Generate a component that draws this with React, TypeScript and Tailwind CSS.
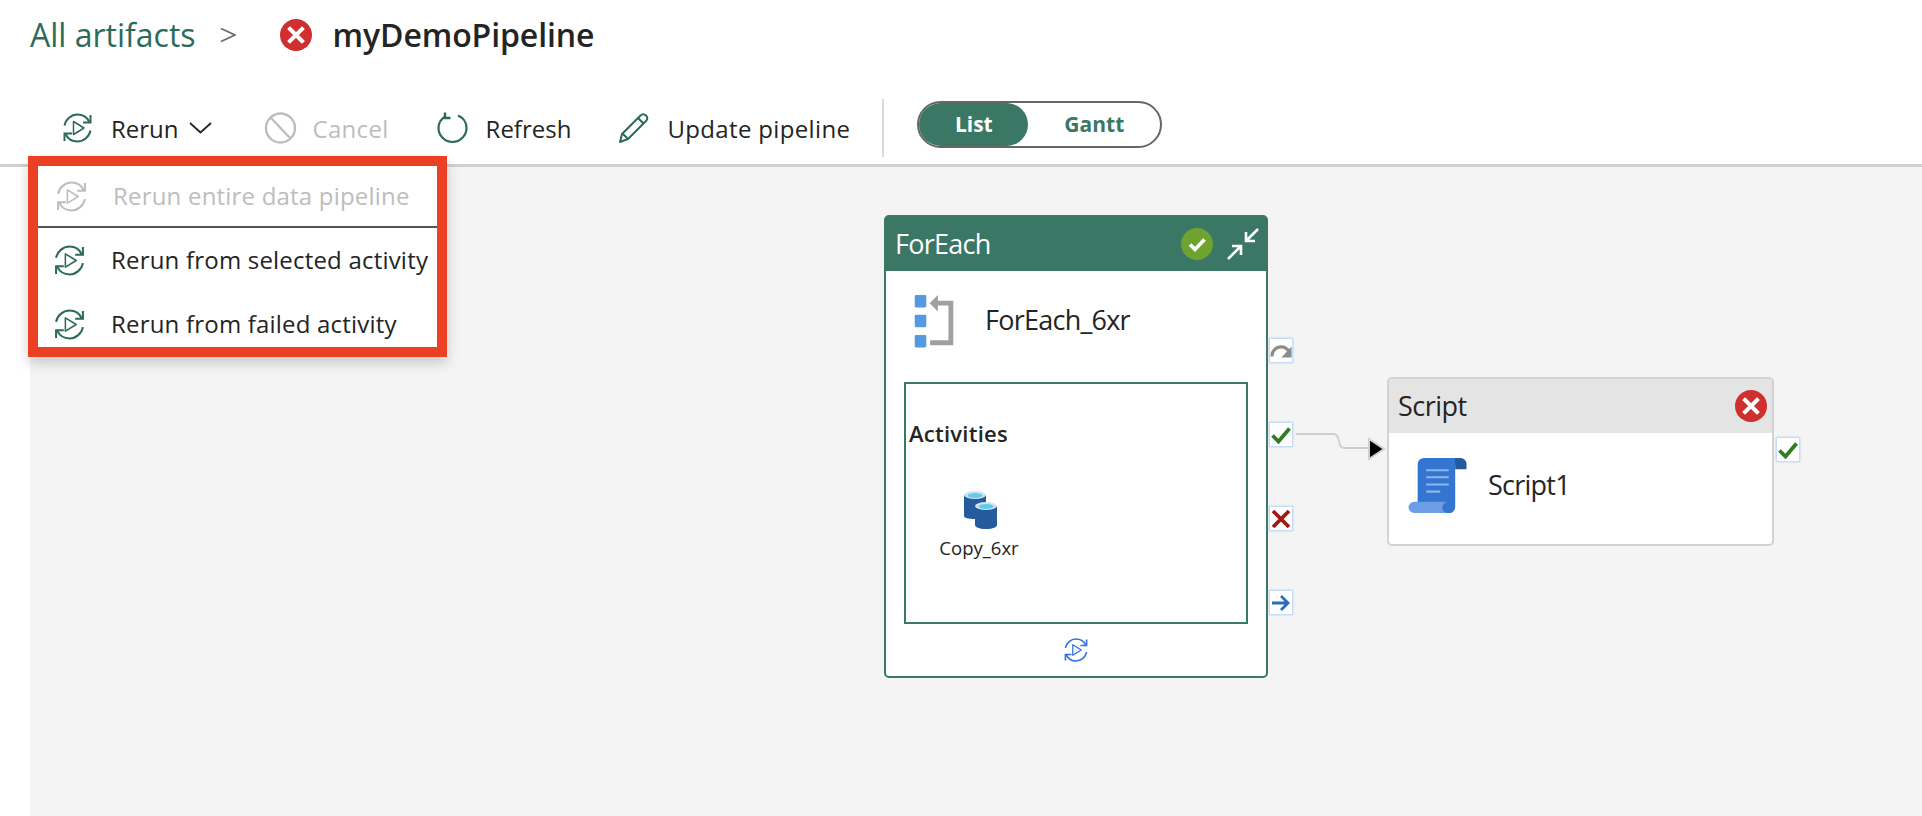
import { ReactNode } from 'react'

const SANS = "font-['Open_Sans',sans-serif]"

function RerunIcon({ className }: { className: string }) {
  return (
    <svg viewBox="0 0 32 32" fill="none" stroke="currentColor" strokeWidth="2" className={className}>
      <path d="M3 13.500C4.200 7.300 9.600 2.500 16 2.500c5.200 0 9.700 3 11.800 7.300" />
      <path d="M29 3v7.500h-7.500" />
      <path d="M29 18.500c-1.200 6.200-6.600 11-13 11-5.200 0-9.700-3-11.800-7.300" />
      <path d="M3 29v-7.500h7.500" />
      <path d="M12 9.500v13l10.500-6.500z" strokeWidth="1.500" strokeLinejoin="round" />
    </svg>
  )
}

function StatusError({ className }: { className: string }) {
  return (
    <svg viewBox="0 0 32 32" className={className}>
      <circle cx="16" cy="16" r="16" fill="#cf2f2e" />
      <path d="M10 10l12 12M22 10L10 22" stroke="#fff" strokeWidth="4" strokeLinecap="square" />
    </svg>
  )
}

function ToolButton({ icon, label, disabled, gap, labelClass }: { icon: ReactNode; label: string; disabled?: boolean; gap: string; labelClass?: string }) {
  return (
    <div className={`flex items-center ${gap} ${disabled ? 'text-[#bdbdbd]' : 'text-[#242424]'}`}>
      {icon}
      <span className={`mt-[1px] text-[24px] ${labelClass ?? ''}`}>{label}</span>
    </div>
  )
}

function Port({ children, top, left }: { children: ReactNode; top: string; left: string }) {
  return (
    <div
      className={`absolute ${top} ${left} flex h-[25px] w-[24px] items-center justify-center border border-[#c7dcf5] bg-white shadow-[0_0_2px_#b5cff0]`}
    >
      {children}
    </div>
  )
}

function CheckMark() {
  return (
    <svg viewBox="0 0 20 18" className="h-[18px] w-[20px] shrink-0">
      <path d="M1.500 9.500l6 6L18.500 2.500" fill="none" stroke="#2f7d20" strokeWidth="3.800" />
    </svg>
  )
}

function MenuRow({ label, disabled, iconClass }: { label: string; disabled?: boolean; iconClass: string }) {
  return (
    <div className={disabled ? 'flex h-[60px] items-center text-[#bdbdbd]' : 'flex h-[64px] items-center text-[#242424]'}>
      <div className={disabled ? 'w-[75px] pl-[17px]' : 'w-[73px] pl-[15px]'}>
        <RerunIcon className={iconClass} />
      </div>
      <span className="text-[24px] tracking-[0.2px] whitespace-nowrap">{label}</span>
    </div>
  )
}

export default function App() {
  return (
    <div className={`${SANS} relative flex h-[816px] w-[1922px] flex-col overflow-hidden bg-white`}>
      <header className="flex h-[70px] items-center pl-[30px]">
        <span className="text-[32px] text-[#2c6b58]">All artifacts</span>
        <svg viewBox="0 0 16 16" fill="none" stroke="#6b6b6b" strokeWidth="1.800" className="ml-[24px] h-[16px] w-[16px]">
          <path d="M1 1.500L15 8 1 14.500" />
        </svg>
        <StatusError className="ml-[44px] h-[32px] w-[32px]" />
        <span className="ml-[21px] text-[32px] font-semibold tracking-[-0.1px] text-[#242424]">myDemoPipeline</span>
      </header>

      <div className="mt-[22px] flex h-[75px] items-center border-b-[3px] border-[#d0d0d0] pl-[61px]">
        <ToolButton gap="gap-[17px]" icon={<RerunIcon className="h-[32px] w-[33px] text-[#2c6b58]" />} label="Rerun" />
        <svg viewBox="0 0 23 12" fill="none" stroke="#242424" strokeWidth="1.800" className="ml-[10px] h-[12px] w-[23px]">
          <path d="M1 1l10.500 9.500L22 1" />
        </svg>
        <div className="ml-[52px]">
          <ToolButton
            disabled
            gap="gap-[16px]"
            label="Cancel"
            labelClass="tracking-[0.3px]"
            icon={
              <svg viewBox="0 0 33 32" fill="none" stroke="#bdbdbd" strokeWidth="2.400" className="h-[32px] w-[33px]">
                <circle cx="16.500" cy="16" r="14.500" />
                <path d="M6.500 5.500l20 21" />
              </svg>
            }
          />
        </div>
        <div className="ml-[48px]">
          <ToolButton
            gap="gap-[18px]"
            label="Refresh"
            icon={
              <svg viewBox="0 0 31 32" fill="none" stroke="#2c6b58" strokeWidth="2.200" className="h-[32px] w-[31px]">
                <path d="M21 3.500c5 2 8.500 6.800 8.500 12.500 0 7.500-6.200 14-14 14S1.500 23.500 1.500 16C1.500 11 4.500 6.500 9 4" />
                <path d="M8 0.500v5.500h5.500" strokeWidth="2.400" />
              </svg>
            }
          />
        </div>
        <div className="ml-[47px]">
          <ToolButton
            gap="gap-[18px]"
            label="Update pipeline"
            labelClass="tracking-[0.35px]"
            icon={
              <svg viewBox="0 0 31 32" fill="none" stroke="#2c6b58" strokeWidth="2" className="h-[32px] w-[31px]">
                <path d="M2 30l2-8L22 4c2-2 4.500-2 6-.5S30 7 28 9L10 27z" strokeLinejoin="round" />
                <path d="M4.500 21.500l5.500 5.500M20 6l5.500 5.500" />
              </svg>
            }
          />
        </div>
        <div className="ml-[32px] h-[58px] w-[2px] bg-[#d9d9d9]" />
        <div className="mb-[7px] ml-[33px] flex h-[47px] w-[245px] rounded-full border-2 border-[#666666] text-[21px] font-bold">
          <div className="flex w-[109px] items-center justify-center rounded-full bg-[#3a7765] text-white">List</div>
          <div className="flex flex-1 items-center justify-center text-[#3a7765]">Gantt</div>
        </div>
      </div>

      <main className="relative ml-[30px] flex-1 bg-[#f4f4f4]">
        {/* canvas offsets: page x - 30, page y - 167 */}
        <section className="absolute top-[48px] left-[854px] flex h-[463px] w-[384px] flex-col rounded-[5px] border-2 border-[#3a7765] bg-white">
          <div className="flex h-[54px] items-center bg-[#3a7765] pl-[9px] text-[27px] tracking-[-0.75px] text-white">
            <span className="mt-[1px]">ForEach</span>
            <svg viewBox="0 0 32 32" className="ml-auto h-[32px] w-[32px]">
              <circle cx="16" cy="16" r="16" fill="#6da32e" />
              <path d="M9 16.500l5 5 9.500-10" fill="none" stroke="#fff" strokeWidth="3.600" />
            </svg>
            <svg viewBox="0 0 34 34" fill="none" stroke="#fff" strokeWidth="2.600" className="mr-[6px] ml-[13px] h-[34px] w-[34px]">
              <path d="M32 2L20 14M20 5v9h9M2 32l13-13M6 19h9v9" />
            </svg>
          </div>
          <div className="flex h-[102px] items-center pl-[28px]">
            <svg viewBox="0 0 40 56" className="h-[54px] w-[40px]">
              <rect x="0" y="0" width="12" height="13" rx="1.500" fill="#539ae3" />
              <rect x="0" y="20.500" width="12" height="13" rx="1.500" fill="#539ae3" />
              <rect x="0" y="41.500" width="12" height="13" rx="1.500" fill="#539ae3" />
              <path d="M22 8.500h15.500v41H16" fill="none" stroke="#a0a0a0" strokeWidth="5" />
              <path d="M15.500 8.500L24 0v17z" fill="#a0a0a0" />
            </svg>
            <span className="mb-[3px] ml-[31px] text-[27px] tracking-[-0.75px] text-[#242424]">ForEach_6xr</span>
          </div>
          <div className="mx-[18px] mt-[9px] h-[242px] border-2 border-[#3a7765] pl-[3px]">
            <div className="mt-[33px] text-[22px] font-semibold tracking-[0.25px] text-[#242424]">Activities</div>
            <div className="mt-[41px] flex w-[140px] flex-col items-center">
              <svg viewBox="0 0 33 38" className="ml-[3px] h-[38px] w-[33px]">
                <path d="M0 4v21c0 2 4 3 11 3s11-1 11-3V4z" fill="#255a9c" />
                <ellipse cx="11" cy="4" rx="11" ry="4" fill="#d7e3ea" />
                <ellipse cx="11" cy="4.500" rx="7.500" ry="2.600" fill="#5ccdf0" />
                <path d="M11 15v19c0 2 4 4 11 4s11-2 11-4V15z" fill="#255a9c" />
                <ellipse cx="22" cy="15" rx="11" ry="4" fill="#d7e3ea" />
                <ellipse cx="22" cy="15.500" rx="7.500" ry="2.600" fill="#5ccdf0" />
              </svg>
              <span className="mt-[5px] text-[18.500px] whitespace-nowrap text-[#242424]">Copy_6xr</span>
            </div>
          </div>
          <div className="flex flex-1 items-center justify-center">
            <RerunIcon className="h-[26px] w-[26px] text-[#2f6fe0]" />
          </div>
        </section>

        <Port top="top-[171px]" left="left-[1239px]">
          <svg viewBox="0 0 24 16" fill="none" className="h-[16px] w-[22px] shrink-0">
            <path d="M2 14c0-6 4.500-10.500 10-10.500 4 0 7 2 9 5.500" stroke="#8c8c8c" strokeWidth="3.400" />
            <path d="M23.500 3v12h-11z" fill="#8c8c8c" />
          </svg>
        </Port>
        <Port top="top-[255px]" left="left-[1239px]">
          <CheckMark />
        </Port>
        <Port top="top-[339px]" left="left-[1239px]">
          <svg viewBox="0 0 20 20" className="h-[20px] w-[20px] shrink-0">
            <path d="M2 2l16 16M18 2L2 18" stroke="#a01a12" strokeWidth="3.800" />
          </svg>
        </Port>
        <Port top="top-[423px]" left="left-[1239px]">
          <svg viewBox="0 0 20 20" fill="none" stroke="#2b6cb8" strokeWidth="2.800" className="h-[20px] w-[20px] shrink-0">
            <path d="M1 10h16M10 3l7 7-7 7" />
          </svg>
        </Port>

        <svg viewBox="0 0 92 40" fill="none" className="absolute top-[262px] left-[1265px] h-[40px] w-[92px]">
          <path d="M1 5h38c7 0 3 14 10 14h26" stroke="#cfcfcf" strokeWidth="1.800" />
          <path d="M74 10l15 10-15 10z" fill="#000" stroke="#d0d0d0" strokeWidth="2" />
        </svg>

        <section className="absolute top-[210px] left-[1357px] flex h-[169px] w-[387px] flex-col overflow-hidden rounded-[5px] border-2 border-[#d2d2d2] bg-white text-[#242424]">
          <div className="flex h-[54px] items-center bg-[#e4e4e4] pr-[5px] pl-[9px] text-[27px] tracking-[-0.5px]">
            <span className="mt-[1px]">Script</span>
            <StatusError className="ml-auto h-[32px] w-[32px]" />
          </div>
          <div className="flex flex-1 items-start pt-[25px] pl-[19px]">
            <svg viewBox="0 0 55 54" preserveAspectRatio="none" className="h-[55px] w-[59px]">
              <path d="M9 6a6 6 0 016-6h34v4c-3 0-5 2-5 5v39a6 6 0 01-6 6H9z" fill="#3375d1" />
              <path d="M44 0h5a5.500 5.500 0 015.500 5.500V11H44z" fill="#255a9c" />
              <path d="M6 43h30v11H6a5.500 5.500 0 010-11z" fill="#6d9ee8" />
              <path d="M32 48.500a5.500 5.500 0 0111 0V50a4 4 0 01-4 4h-2a5 5 0 01-5-5.500z" fill="#3375d1" />
              <path d="M17 12h21M17 19h21M17 26h21M17 33h13" stroke="#8db5ee" strokeWidth="2" />
            </svg>
            <span className="mt-[7px] ml-[21px] text-[27px] tracking-[-0.75px]">Script1</span>
          </div>
        </section>
        <Port top="top-[270px]" left="left-[1746px]">
          <CheckMark />
        </Port>
      </main>

      <div className="absolute top-[156px] left-[28px] h-[201px] w-[419px] overflow-hidden border-[10px] border-[#ec4024] bg-white shadow-[0_6px_12px_rgba(0,0,0,0.18)]">
        <MenuRow disabled label="Rerun entire data pipeline" iconClass="h-[33px] w-[33px]" />
        <div className="h-[2px] bg-[#555555]" />
        <MenuRow label="Rerun from selected activity" iconClass="h-[33px] w-[33px] text-[#2c6b58]" />
        <MenuRow label="Rerun from failed activity" iconClass="h-[33px] w-[33px] text-[#2c6b58]" />
      </div>
    </div>
  )
}
